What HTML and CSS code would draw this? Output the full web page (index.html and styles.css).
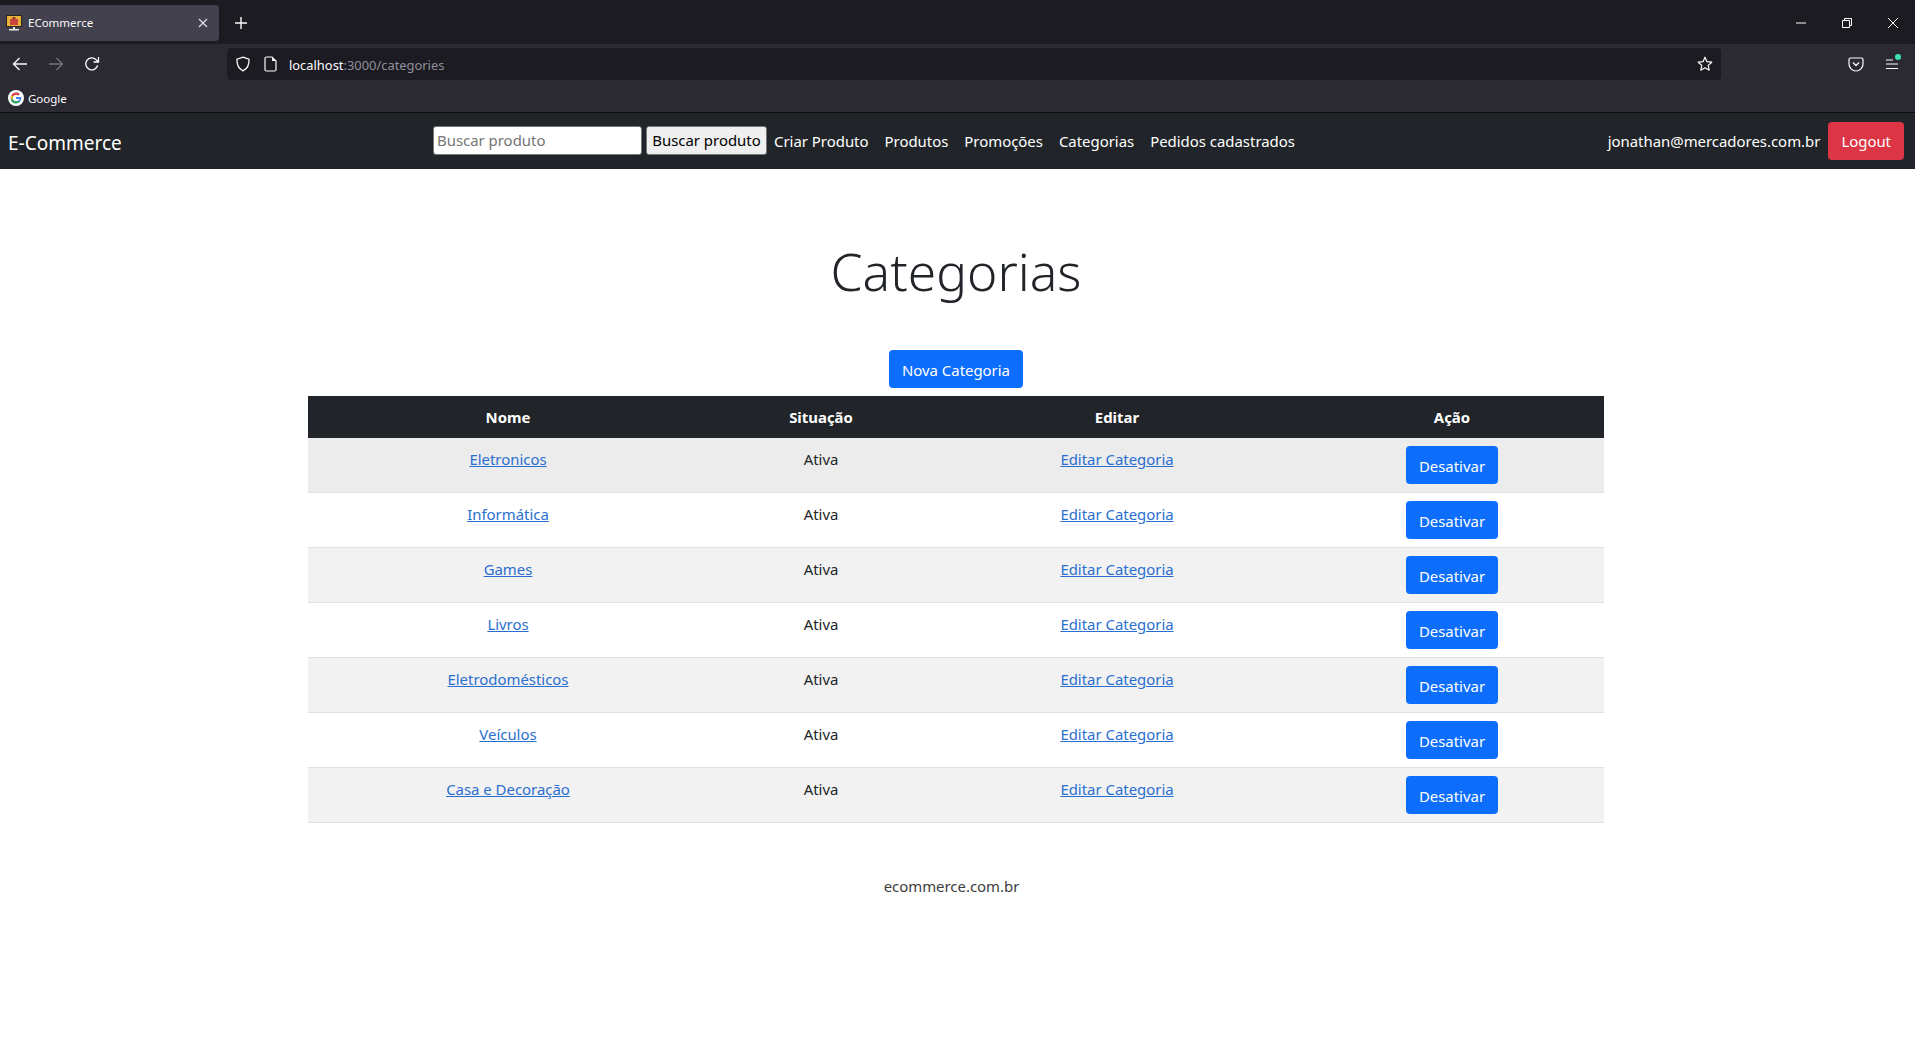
FILE: index.html
```html
<!DOCTYPE html>
<html lang="pt-BR">
<head>
    <meta charset="UTF-8" />
    <meta name="viewport" content="width=device-width, initial-scale=1" />
    <title>ECommerce</title>
    <link rel="stylesheet" href="styles.css">
</head>
<body>

<!-- barra do navegador -->
<div class="browser">
    <div class="tabbar">
        <div class="tab">
            <svg class="favicon" width="16" height="16" viewBox="0 0 16 16">
                <rect x="0" y="0" width="16" height="12" fill="#2a2520"/>
                <rect x="1" y="1" width="14" height="10" fill="#eab23a"/>
                <rect x="4" y="4" width="8" height="6" fill="#c9433f"/>
                <rect x="6.500" y="2" width="3" height="2" fill="#8a3a30"/>
                <rect x="7" y="12" width="2" height="2" fill="#e8e8e8"/>
                <rect x="3" y="14" width="10" height="1.500" fill="#e8e8e8"/>
            </svg>
            <span class="tab-title">ECommerce</span>
            <svg class="tab-close" width="10" height="10" viewBox="0 0 10 10">
                <path d="M1 1l8 8M9 1l-8 8" stroke="#e4e4e8" stroke-width="1.1" fill="none"/>
            </svg>
        </div>
        <svg class="new-tab" width="12" height="12" viewBox="0 0 12 12">
            <path d="M6 0v12M0 6h12" stroke="#fbfbfe" stroke-width="1.4" fill="none"/>
        </svg>
        <div class="window-controls">
            <svg width="10" height="10" viewBox="0 0 10 10"><path d="M0 5h10" stroke="#fff" fill="none"/></svg>
            <svg width="10" height="10" viewBox="0 0 10 10"><path d="M.5 2.500h7v7h-7zM2.500 2.500v-2h7v7h-2" stroke="#fff" fill="none"/></svg>
            <svg width="10" height="10" viewBox="0 0 10 10"><path d="M0 0l10 10M10 0l-10 10" stroke="#fff" fill="none"/></svg>
        </div>
    </div>
    <div class="toolbar">
        <div class="nav-buttons">
            <svg width="16" height="16" viewBox="0 0 16 16"><path d="M15 8H1.500M7.500 2l-6 6 6 6" stroke="#fbfbfe" stroke-width="1.3" fill="none"/></svg>
            <svg width="16" height="16" viewBox="0 0 16 16"><path d="M1 8h13.500M8.500 2l6 6-6 6" stroke="#74737c" stroke-width="1.3" fill="none"/></svg>
            <svg width="16" height="16" viewBox="0 0 16 16"><path d="M13.600 9.500A6 6 0 1 1 12 3.600L14 5.500M14.500 1v5h-5" stroke="#fbfbfe" stroke-width="1.3" fill="none"/></svg>
        </div>
        <div class="urlbar">
            <svg class="url-shield" width="16" height="16" viewBox="0 0 16 16"><path d="M8 1.200l6 2c.3 5.500-1.600 9.500-6 11.600C3.600 12.700 1.700 8.700 2 3.200z" stroke="#fbfbfe" stroke-width="1.3" fill="none"/></svg>
            <svg class="url-page" width="14" height="16" viewBox="0 0 14 16"><path d="M2.500 1H8l4 4v8.500a1.500 1.500 0 0 1-1.500 1.500h-8A1.500 1.500 0 0 1 1 13.500v-11A1.500 1.500 0 0 1 2.500 1z" stroke="#fbfbfe" stroke-width="1.2" fill="none"/><path d="M8 1l4 4H8z" fill="#fbfbfe"/></svg>
            <span class="url-text">localhost<span class="url-dim">:3000/categories</span></span>
            <svg class="url-star" width="16" height="16" viewBox="0 0 16 16"><path d="M8 1.200l2 4.500 4.800.5-3.600 3.200 1 4.800L8 11.800l-4.200 2.400 1-4.800-3.600-3.200 4.800-.5z" stroke="#fbfbfe" stroke-width="1.2" stroke-linejoin="round" fill="none"/></svg>
        </div>
        <svg class="pocket" width="16" height="16" viewBox="0 0 16 16"><path d="M2.500 2h11A1.500 1.500 0 0 1 15 3.500V8a7 7 0 0 1-14 0V3.500A1.500 1.500 0 0 1 2.500 2z" stroke="#fbfbfe" stroke-width="1.2" fill="none"/><path d="M5 6.500l3 3 3-3" stroke="#fbfbfe" stroke-width="1.3" fill="none"/></svg>
        <div class="menu-button">
            <svg width="14" height="12" viewBox="0 0 14 12"><path d="M1 2h7M1 6h12M1 10.500h12" stroke="#fbfbfe" stroke-width="1.2" fill="none"/></svg>
            <span class="menu-dot"></span>
        </div>
    </div>
    <div class="bookmarks">
        <svg width="16" height="16" viewBox="0 0 16 16">
            <circle cx="8" cy="8" r="8" fill="#fff"/>
            <path d="M8 7v2.100h3.300c-.3 1.300-1.500 2.200-3.300 2.200a3.300 3.300 0 0 1 0-6.600c.9 0 1.600.3 2.200.8l1.500-1.500A5.400 5.400 0 1 0 13.400 8c0-.3 0-.7-.1-1z" fill="#4285f4"/>
            <path d="M3.400 5.300L5.100 6.600A3.300 3.300 0 0 1 8 4.700c.9 0 1.600.3 2.200.8l1.500-1.500A5.400 5.400 0 0 0 3.400 5.300z" fill="#ea4335"/>
            <path d="M2.900 9.800l1.800-1.300a3.300 3.300 0 0 1 .4-1.900L3.400 5.300a5.400 5.400 0 0 0-.5 4.500z" fill="#fbbc05"/>
            <path d="M8 13.400c1.500 0 2.700-.5 3.600-1.300l-1.700-1.400c-.5.400-1.100.6-1.900.6a3.300 3.300 0 0 1-3.200-2.400l-1.800 1.300A5.400 5.400 0 0 0 8 13.400z" fill="#34a853"/>
        </svg>
        <span class="bookmark-label">Google</span>
    </div>
</div>

<!-- navbar da loja -->
<nav class="navbar">
    <a class="brand" href="#">E-Commerce</a>
    <form class="search">
        <input type="text" placeholder="Buscar produto" />
        <button type="button">Buscar produto</button>
    </form>
    <ul class="nav-links">
        <li><a href="#">Criar Produto</a></li>
        <li><a href="#">Produtos</a></li>
        <li><a href="#">Promoções</a></li>
        <li><a href="#">Categorias</a></li>
        <li><a href="#">Pedidos cadastrados</a></li>
    </ul>
    <div class="user">
        <span class="user-email">jonathan@mercadores.com.br</span>
        <button class="btn btn-danger" type="button">Logout</button>
    </div>
</nav>

<main class="container">
    <h1>Categorias</h1>
    <div class="actions">
        <a class="btn btn-primary btn-new" href="#">Nova Categoria</a>
    </div>
    <table class="table">
        <colgroup>
            <col class="col-name" />
            <col class="col-status" />
            <col class="col-edit" />
            <col class="col-action" />
        </colgroup>
        <thead>
            <tr>
                <th>Nome</th>
                <th>Situação</th>
                <th>Editar</th>
                <th>Ação</th>
            </tr>
        </thead>
        <tbody>
            <tr class="row-hover">
                <td><a href="#">Eletronicos</a></td>
                <td>Ativa</td>
                <td><a href="#">Editar Categoria</a></td>
                <td class="cell-action"><button class="btn btn-primary" type="button">Desativar</button></td>
            </tr>
            <tr>
                <td><a href="#">Informática</a></td>
                <td>Ativa</td>
                <td><a href="#">Editar Categoria</a></td>
                <td class="cell-action"><button class="btn btn-primary" type="button">Desativar</button></td>
            </tr>
            <tr>
                <td><a href="#">Games</a></td>
                <td>Ativa</td>
                <td><a href="#">Editar Categoria</a></td>
                <td class="cell-action"><button class="btn btn-primary" type="button">Desativar</button></td>
            </tr>
            <tr>
                <td><a href="#">Livros</a></td>
                <td>Ativa</td>
                <td><a href="#">Editar Categoria</a></td>
                <td class="cell-action"><button class="btn btn-primary" type="button">Desativar</button></td>
            </tr>
            <tr>
                <td><a href="#">Eletrodomésticos</a></td>
                <td>Ativa</td>
                <td><a href="#">Editar Categoria</a></td>
                <td class="cell-action"><button class="btn btn-primary" type="button">Desativar</button></td>
            </tr>
            <tr>
                <td><a href="#">Veículos</a></td>
                <td>Ativa</td>
                <td><a href="#">Editar Categoria</a></td>
                <td class="cell-action"><button class="btn btn-primary" type="button">Desativar</button></td>
            </tr>
            <tr>
                <td><a href="#">Casa e Decoração</a></td>
                <td>Ativa</td>
                <td><a href="#">Editar Categoria</a></td>
                <td class="cell-action"><button class="btn btn-primary" type="button">Desativar</button></td>
            </tr>
        </tbody>
    </table>
</main>

<footer class="footer">ecommerce.com.br</footer>

</body>
</html>
```

FILE: styles.css
```css
* {
    box-sizing: border-box;
}
body {
    margin: 0;
    font-family: "Noto Sans", sans-serif;
    font-size: 14.92px;
    line-height: 24px;
    color: #212529;
    background-color: #fff;
}

/* navegador */
.browser {
    height: 113px;
    background-color: #2b2a33;
    border-bottom: 1px solid #0c0c0d;
    color: #fbfbfe;
    font-size: 11.5px;
}
.tabbar {
    height: 44px;
    background-color: #1c1b22;
    display: flex;
    align-items: center;
    padding-top: 2px;
}
.tab {
    width: 219px;
    height: 36px;
    background-color: #42414d;
    border-radius: 0 4px 4px 0;
    display: flex;
    align-items: center;
    padding: 0 11px 0 6px;
}
.favicon {
    margin-right: 6px;
}
.tab-title {
    flex: 1;
}
.new-tab {
    margin-left: 16px;
}
.window-controls {
    margin-left: auto;
    display: flex;
    gap: 36px;
    padding-right: 17px;
}
.toolbar {
    height: 40px;
    display: flex;
    align-items: center;
}
.nav-buttons {
    width: 227px;
    display: flex;
    gap: 20px;
    padding-left: 12px;
}
.urlbar {
    width: 1494px;
    height: 32px;
    background-color: #1c1b22;
    border-radius: 4px;
    display: flex;
    align-items: center;
    padding: 0 8px;
    font-size: 12.9px;
}
.url-shield {
    margin-right: 13px;
}
.url-page {
    margin-right: 11px;
}
.url-text {
    padding-top: 2px;
}
.url-dim {
    color: #8f8f9d;
}
.url-star {
    margin-left: auto;
}
.pocket {
    margin-left: 127px;
}
.menu-button {
    position: relative;
    margin-left: 21px;
    height: 12px;
    display: flex;
}
.menu-dot {
    position: absolute;
    top: -4px;
    right: -2px;
    width: 6px;
    height: 6px;
    border-radius: 50%;
    background-color: #3fe1b0;
}
.bookmarks {
    height: 28px;
    display: flex;
    align-items: center;
    gap: 4px;
    padding-left: 8px;
}
.bookmark-label {
    padding-top: 2px;
}

/* navbar */
.navbar {
    height: 56px;
    background-color: #212529;
    display: flex;
    align-items: center;
    padding: 0 11px 0 8px;
}
.brand {
    width: 425px;
    padding-top: 3px;
    color: #fff;
    font-size: 19px;
    text-decoration: none;
}
.search {
    display: flex;
    gap: 4px;
    margin-bottom: 2px;
}
.search input {
    width: 209px;
    height: 29px;
    padding: 0 3px;
    border: 1px solid #767676;
    border-radius: 3px;
    font-family: inherit;
    font-size: 14.92px;
    background-color: #fff;
}
.search input::placeholder {
    color: #757575;
}
.search button {
    width: 121px;
    height: 29px;
    padding: 0;
    border: 1px solid #767676;
    border-radius: 3px;
    font-family: inherit;
    font-size: 14.92px;
    color: #000;
    background-color: #efefef;
}
.nav-links {
    list-style: none;
    margin: 0 0 0 7px;
    padding: 0;
    display: flex;
    gap: 16px;
}
.nav-links a {
    color: #fff;
    text-decoration: none;
}
.user {
    margin-left: auto;
    display: flex;
    align-items: center;
    gap: 8px;
}
.user-email {
    color: #fff;
}

/* botoes */
.btn {
    display: inline-block;
    padding: 6px 12px;
    border: 1px solid transparent;
    border-radius: 4px;
    font-family: inherit;
    font-size: 14.92px;
    line-height: 24px;
    color: #fff;
    text-decoration: none;
    vertical-align: top;
}
.btn-primary {
    padding: 7px 12px 5px;
    background-color: #0d6efd;
}
.btn-danger {
    background-color: #dc3545;
}

/* conteudo */
.container {
    width: 1296px;
    margin: 0 311px 0 308px;
}
h1 {
    margin: 0;
    padding: 68px 0 45px;
    font-size: 51.5px;
    font-weight: 300;
    line-height: 68px;
    text-align: center;
}
.actions {
    display: flex;
    justify-content: center;
    margin-bottom: 8px;
}
.table {
    width: 100%;
    border-collapse: collapse;
    table-layout: fixed;
    text-align: center;
}
.col-name {
    width: 400px;
}
.col-status {
    width: 226px;
}
.col-edit {
    width: 366px;
}
.col-action {
    width: 304px;
}
.table th {
    padding: 9px 8px;
    background-color: #212529;
    color: #fff;
    font-weight: 700;
}
.table td {
    padding: 9px 8px 7px;
    vertical-align: top;
    border-bottom: 1px solid #dee2e6;
}
.table td.cell-action {
    padding: 8px;
}
.table tbody tr:nth-child(odd) td {
    background-color: #f2f2f2;
}
.table tbody tr.row-hover td {
    background-color: #ececec;
}
.table a {
    color: #2a6fd0;
}
.footer {
    padding-top: 51px;
    padding-right: 12px;
    text-align: center;
    color: #3d3d3d;
}
```
